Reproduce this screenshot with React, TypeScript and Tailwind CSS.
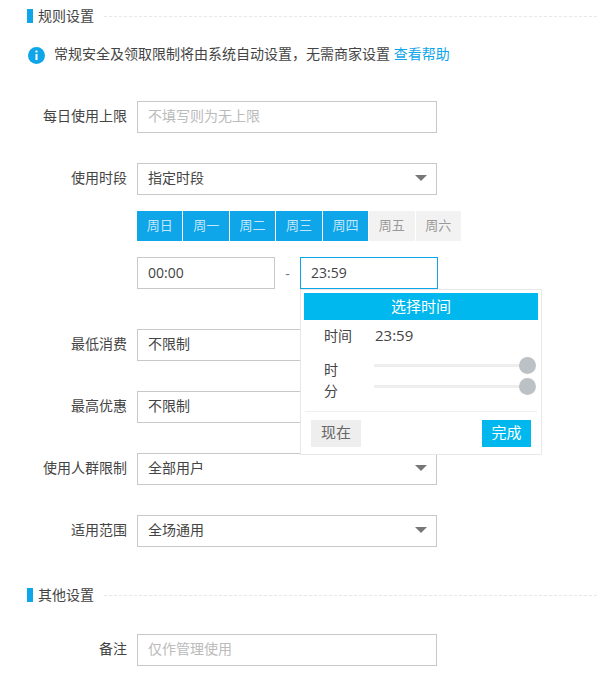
import React from "react";

const font = { fontFamily: '"Open Sans", "Noto Sans CJK SC", sans-serif' };

function Section({ title }: { title: string }) {
  return (
    <div className="flex items-center h-[16px]">
      <div className="w-[6px] h-[14px] bg-[#0ea5e9] ml-[27px] shrink-0" />
      <div className="ml-[5px] text-[14px] leading-[16px] text-[#444] w-[66px]">{title}</div>
      <div className="flex-1 border-t border-dashed border-[#e8e8e8]" />
    </div>
  );
}

function Row({ label, children, className = "" }: { label: string; children: React.ReactNode; className?: string }) {
  return (
    <div className={"flex items-center h-[32px] " + className}>
      <div className="w-[127px] text-right text-[14px] leading-[30px] pb-[2px] text-[#444]">{label}</div>
      <div className="ml-[10px]">{children}</div>
    </div>
  );
}

function Box({ text, placeholder = false }: { text: string; placeholder?: boolean }) {
  return (
    <div className={"w-[300px] h-[32px] border border-[#c8c8c8] pl-[10px] text-[14px] leading-[28px] " + (placeholder ? "text-[#bbb]" : "text-[#444]")}>
      {text}
    </div>
  );
}

function Select({ text }: { text: string }) {
  return (
    <div className="relative w-[300px] h-[32px] border border-[#c8c8c8] pl-[10px] pr-[9px] text-[14px] leading-[28px] text-[#444] bg-white flex justify-between">
      <span>{text}</span>
      <span className="mt-[11px] w-0 h-0 border-x-[6px] border-x-transparent border-t-[6px] border-t-[#777]" />
    </div>
  );
}

const days = ["周日", "周一", "周二", "周三", "周四", "周五", "周六"];

export default function App() {
  return (
    <div className="relative w-[597px] h-[673px] overflow-hidden bg-white pt-[8px]" style={font}>
      <Section title="规则设置" />
      <div className="flex items-center mt-[22px] h-[18px] ml-[28px]">
        <svg width="17" height="17" viewBox="0 0 17 17">
          <circle cx="8.5" cy="8.5" r="8.5" fill="#0ea5e9" />
          <rect x="7.5" y="3.5" width="2" height="2" fill="#fff" />
          <rect x="7.5" y="7" width="2" height="6" fill="#fff" />
        </svg>
        <span className="ml-[9px] text-[14px] leading-[18px] pb-[2px] text-[#444]">
          常规安全及领取限制将由系统自动设置，无需商家设置 <span className="text-[#0ea5e9]">查看帮助</span>
        </span>
      </div>

      <Row label="每日使用上限" className="mt-[37px]">
        <Box text="不填写则为无上限" placeholder />
      </Row>
      <Row label="使用时段" className="mt-[30px]">
        <Select text="指定时段" />
      </Row>
      <div className="grid grid-cols-7 gap-x-[1px] w-[324px] ml-[137px] mt-[16px] h-[30px]">
        {days.map((d, i) => (
          <div
            key={d}
            className={
              "text-center text-[13px] leading-[29px] " +
              (i < 5 ? "bg-[#0ea5e9] text-[#c4e8fb]" : "bg-[#f2f2f2] text-[#999]")
            }
          >
            {d}
          </div>
        ))}
      </div>
      <div className="flex items-center ml-[137px] mt-[16px] h-[32px]">
        <div className="w-[138px] h-[32px] border border-[#c8c8c8] pl-[10px] text-[14px] leading-[29px] text-[#444]">00:00</div>
        <div className="w-[25px] text-center text-[14px] text-[#777]">-</div>
        <div className="w-[138px] h-[32px] border border-[#0ea5e9] pl-[10px] text-[14px] leading-[29px] text-[#444]">23:59</div>
      </div>
      <Row label="最低消费" className="mt-[40px]">
        <Box text="不限制" />
      </Row>
      <Row label="最高优惠" className="mt-[30px]">
        <Box text="不限制" />
      </Row>
      <Row label="使用人群限制" className="mt-[30px]">
        <Select text="全部用户" />
      </Row>
      <Row label="适用范围" className="mt-[30px]">
        <Select text="全场通用" />
      </Row>
      <div className="mt-[40px]">
        <Section title="其他设置" />
      </div>
      <Row label="备注" className="mt-[31px]">
        <Box text="仅作管理使用" placeholder />
      </Row>

      <div className="absolute left-[300px] top-[289px] w-[242px] h-[166px] bg-white border border-[#e8e8e8] px-[3px] pt-[3px]">
        <div className="h-[27px] bg-[#00b7ee] text-white text-center text-[15px] leading-[26px] w-[234px]">选择时间</div>
        <div className="flex items-center h-[33px] pb-[2px] text-[14px] text-[#444]">
          <span className="ml-[20px] w-[51px]">时间</span>
          <span className="text-[15px]">23:59</span>
        </div>
        <div className="relative h-[42px] text-[14px] text-[#444] leading-[21px] mt-[6px]">
          <div className="ml-[20px]">时</div>
          <div className="ml-[20px]">分</div>
          <div className="absolute left-[70px] top-[5px] w-[160px] h-[3px] bg-[#eee]" />
          <div className="absolute left-[70px] top-[26px] w-[160px] h-[3px] bg-[#eee]" />
          <div className="absolute left-[215px] top-[-2px] w-[17px] h-[17px] rounded-full bg-[#bcc1c6]" />
          <div className="absolute left-[215px] top-[19px] w-[17px] h-[17px] rounded-full bg-[#bcc1c6]" />
        </div>
        <div className="border-t border-[#eee] mt-[10px] w-[232px] ml-[1px]" />
        <div className="flex justify-between mt-[8px] pl-[7px] pr-[7px] w-[234px]">
          <div className="w-[50px] h-[27px] bg-[#eee] text-[#666] text-[15px] leading-[24px] text-center">现在</div>
          <div className="w-[49px] h-[27px] bg-[#00b7ee] text-white text-[15px] leading-[24px] text-center">完成</div>
        </div>
      </div>
    </div>
  );
}
